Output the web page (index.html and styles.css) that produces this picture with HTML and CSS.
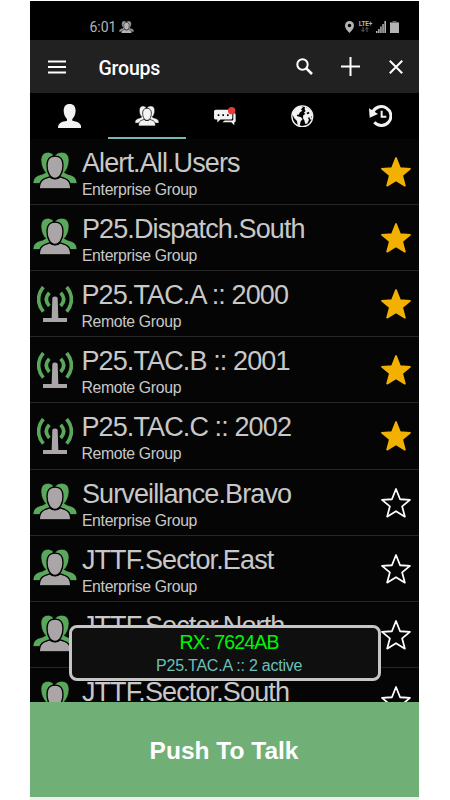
FILE: index.html
```
<!DOCTYPE html>
<html lang="en">
<head>
    <meta charset="UTF-8">
    <meta name="viewport" content="width=device-width, initial-scale=1.0">
    <title>Groups</title>
    <link rel="stylesheet" href="styles.css">
</head>
<body>
    <svg class="sprite" aria-hidden="true">
        <symbol id="group" viewBox="0 0 132 110">
            <g class="back">
                <path d="M47 0C31 0 23 10 24 27C25 42 30 53 38 61L28 66C12 70 1 74 0 94H40L60 60V5Z"/>
                <path d="M85 0C101 0 109 10 108 27C107 42 102 53 94 61L104 66C120 70 131 74 132 94H92L66 60V9Q74 0 85 0Z"/>
            </g>
            <g class="front">
                <path d="M19 110C19 88 26 81 50 74C59 82 73 82 82 74C106 81 113 88 113 110Z"/>
                <path d="M66 12C82 12 90 23 90 39C90 62 80 79 66 79S42 62 42 39C42 23 50 12 66 12Z"/>
            </g>
        </symbol>
        <symbol id="radio" viewBox="0 0 108 108">
            <path d="M19 3C0 26 0 54 19 77M37 20C25 33 25 47 37 60M89 3C108 26 108 54 89 77M71 20C83 33 83 47 71 60" fill="none" stroke="#5aa85c" stroke-width="11"/>
            <path d="M46 35Q54 28 62 35L64 96H90V108H18V96H44Z" fill="#aaa6a8"/>
        </symbol>
        <symbol id="star" viewBox="0 0 88 88">
            <path d="M44 3L56 33L85 35L62 54L70 84L44 68L18 84L26 54L3 35L32 33Z"/>
        </symbol>
    </svg>

    <div class="phone">
        <div class="status-bar">
            <span class="time">6:01</span>
            <svg class="status-group"><use href="#group"/></svg>
            <div class="status-right">
                <svg class="pin" viewBox="0 0 9 12"><path fill-rule="evenodd" d="M4.500 0a4.500 4.500 0 0 1 4.500 4.500C9 8 4.500 12 4.500 12S0 8 0 4.500A4.500 4.500 0 0 1 4.500 0ZM4.500 2.700a1.800 1.800 0 1 0 0 3.600a1.800 1.800 0 1 0 0-3.600Z"/></svg>
                <div class="lte">
                    <span>LTE+</span>
                    <svg viewBox="0 0 8 5"><path d="M2 0V4.500M.3 2.800L2 4.500L3.700 2.800M6 5V.5M4.300 2.200L6 .5L7.700 2.200"/></svg>
                </div>
                <svg class="signal" viewBox="0 0 10 12"><path d="M0 10h1.500v2H0zM2.100 8h1.500v4H2.100zM4.200 5.500h1.500V12H4.200zM6.300 3h1.500v9H6.300zM8.400 0H10v12H8.400z"/></svg>
                <svg class="battery" viewBox="0 0 9 12"><path d="M2.500 0h4v1H9v1H0V1h2.500z" opacity=".6"/><path d="M0 2h9v10H0z"/></svg>
            </div>
        </div>

        <header class="toolbar">
            <svg class="menu-icon" viewBox="0 0 18 14"><path d="M0 1.500H18M0 7H18M0 12.500H18"/></svg>
            <h1>Groups</h1>
            <svg class="search-icon" viewBox="0 0 17 17"><circle cx="6.500" cy="6.500" r="5.200"/><path d="M10.300 10.300L16 16" stroke-width="2.600"/></svg>
            <svg class="plus-icon" viewBox="0 0 19 19"><path d="M9.500 0V19M0 9.500H19"/></svg>
            <svg class="close-icon" viewBox="0 0 14 14"><path d="M.8 .8L13.200 13.200M13.200 .8L.8 13.200"/></svg>
        </header>

        <nav class="tabs">
            <div class="tab">
                <svg class="icon-user" viewBox="0 0 70 72"><path d="M35 0C47 0 53 8 53 20C53 31 48 40 43 45V50C58 53 70 56 70 72H0C0 56 12 53 27 50V45C22 40 17 31 17 20C17 8 23 0 35 0Z"/></svg>
            </div>
            <div class="tab active">
                <svg class="icon-group"><use href="#group"/></svg>
            </div>
            <div class="tab">
                <svg class="icon-chat" viewBox="0 0 66 56">
                    <path d="M58 19h3q4 0 4 4v19q0 4-4 4v9l-9-9H25l7-5h23q3 0 3-4z"/>
                    <path d="M5 8h45q5 0 5 5v20q0 5-5 5H19l-9 9v-9H5q-5 0-5-5V13q0-5 5-5z"/>
                    <path d="M11 22h5v5h-5zM25 22h5v5h-5zM39 22h5v5h-5z" fill="#000"/>
                    <circle cx="53" cy="11" r="11" fill="#e8393c"/>
                </svg>
            </div>
            <div class="tab">
                <svg class="icon-globe" viewBox="0 0 68 68">
                    <circle cx="34" cy="34" r="31.500" fill="none" stroke="#f2f2f2" stroke-width="4"/>
                    <path d="M5 22L16 8L32 3L36 7L30 13L34 17L27 22L23 29L17 29L19 34L29 36L35 42L29 50L26 63L20 61L18 48L10 40L5 30Z"/>
                    <path d="M42 5L55 11L62 21L65 33L60 35L64 40L60 46L55 37L51 38L54 45L49 56L43 57L40 46L36 40L37 31L43 27L39 23L44 18L41 13Z"/>
                    <path d="M46 24L53 20L56 25L50 28Z" fill="#000"/>
                </svg>
            </div>
            <div class="tab">
                <svg class="icon-history" viewBox="0 0 70 66">
                    <path d="M11 22A28.500 28.500 0 1 1 16 52" fill="none" stroke="#f2f2f2" stroke-width="9"/>
                    <path d="M0 10L27 27L2 38Z"/>
                    <path d="M38 17V35H52" fill="none" stroke="#f2f2f2" stroke-width="6"/>
                </svg>
            </div>
        </nav>

        <main class="list">
            <div class="row">
                <svg class="group-icon"><use href="#group"/></svg>
                <div class="info"><h2>Alert.All.Users</h2><p>Enterprise Group</p></div>
                <svg class="star on"><use href="#star"/></svg>
            </div>
            <div class="row">
                <svg class="group-icon"><use href="#group"/></svg>
                <div class="info"><h2>P25.Dispatch.South</h2><p>Enterprise Group</p></div>
                <svg class="star on"><use href="#star"/></svg>
            </div>
            <div class="row">
                <svg class="radio-icon"><use href="#radio"/></svg>
                <div class="info"><h2>P25.TAC.A :: 2000</h2><p>Remote Group</p></div>
                <svg class="star on"><use href="#star"/></svg>
            </div>
            <div class="row">
                <svg class="radio-icon"><use href="#radio"/></svg>
                <div class="info"><h2>P25.TAC.B :: 2001</h2><p>Remote Group</p></div>
                <svg class="star on"><use href="#star"/></svg>
            </div>
            <div class="row">
                <svg class="radio-icon"><use href="#radio"/></svg>
                <div class="info"><h2>P25.TAC.C :: 2002</h2><p>Remote Group</p></div>
                <svg class="star on"><use href="#star"/></svg>
            </div>
            <div class="row">
                <svg class="group-icon"><use href="#group"/></svg>
                <div class="info"><h2>Surveillance.Bravo</h2><p>Enterprise Group</p></div>
                <svg class="star"><use href="#star"/></svg>
            </div>
            <div class="row">
                <svg class="group-icon"><use href="#group"/></svg>
                <div class="info"><h2>JTTF.Sector.East</h2><p>Enterprise Group</p></div>
                <svg class="star"><use href="#star"/></svg>
            </div>
            <div class="row">
                <svg class="group-icon"><use href="#group"/></svg>
                <div class="info"><h2>JTTF.Sector.North</h2></div>
                <svg class="star"><use href="#star"/></svg>
            </div>
            <div class="row">
                <svg class="group-icon"><use href="#group"/></svg>
                <div class="info"><h2>JTTF.Sector.South</h2></div>
                <svg class="star"><use href="#star"/></svg>
            </div>

            <!-- Incoming call popup -->
            <div class="popup">
                <div class="rx">RX: 7624AB</div>
                <div class="active-group">P25.TAC.A :: 2 active</div>
            </div>
        </main>

        <button class="ptt">Push To Talk</button>
    </div>
</body>
</html>
```
FILE: styles.css
```
* {
    box-sizing: border-box;
}

body {
    font-family: "Liberation Sans", Arial, sans-serif;
    margin: 0;
    padding: 1px 0 0 30.4px;
    height: 800px;
    overflow: hidden;
    background: #fff;
}

h1, h2, p {
    margin: 0;
    font-weight: normal;
}

svg {
    display: block;
    flex: none;
}

.sprite {
    position: absolute;
    width: 0;
    height: 0;
}

.phone {
    display: flex;
    flex-direction: column;
    width: 388.8px;
    height: 799px;
    background: #f0f0f0;
    padding-bottom: 3.5px;
}

/* Status bar */
.status-bar {
    display: flex;
    align-items: center;
    height: 39px;
    flex: none;
    padding: 13px 20.5px 0 59px;
    background: #000;
    color: #b4b4b4;
    fill: #b4b4b4;
}

.time {
    font: 14px Roboto, sans-serif;
    width: 30px;
}

.status-group {
    width: 15px;
    height: 12.5px;
    --back: #999;
    --front: #b4b4b4;
}

.status-right {
    display: flex;
    align-items: center;
    margin-left: auto;
}

.pin {
    width: 9px;
    height: 12px;
    margin-right: 4.5px;
}

.lte {
    width: 14px;
    height: 12px;
    margin-right: 3px;
    font: bold 6.5px/6px Roboto, sans-serif;
    letter-spacing: -0.1px;
}

.lte span {
    display: block;
}

.lte svg {
    width: 8px;
    height: 5px;
    margin-left: 2px;
    fill: none;
    stroke: #777;
    stroke-width: 0.8;
}

.signal {
    width: 10px;
    height: 12px;
    margin-right: 4px;
}

.battery {
    width: 9px;
    height: 12px;
}

/* Toolbar */
.toolbar {
    display: flex;
    align-items: center;
    height: 53px;
    flex: none;
    padding: 0 16px 0 17.6px;
    background: #212121;
    stroke: #fff;
    stroke-width: 2;
    fill: none;
}

.toolbar h1 {
    flex: 1;
    margin-left: 32.5px;
    padding-top: 3px;
    color: #fff;
    font: 500 19.5px Roboto, sans-serif;
    letter-spacing: -0.2px;
}

.menu-icon {
    width: 18px;
    height: 14px;
}

.search-icon {
    width: 17px;
    height: 17px;
    margin-right: 28px;
}

.plus-icon {
    width: 19px;
    height: 19px;
    margin-right: 29px;
}

.close-icon {
    width: 14px;
    height: 14px;
}

/* Tabs */
.tabs {
    display: grid;
    grid-template-columns: repeat(5, 1fr);
    height: 45.8px;
    flex: none;
    background: #000;
    fill: #f2f2f2;
}

.tab {
    display: flex;
    align-items: center;
    justify-content: center;
    border-bottom: 2px solid transparent;
    padding-top: 2px;
}

.tab.active {
    border-bottom-color: #77b8b4;
}

.icon-user {
    width: 23.3px;
    height: 24px;
}

.icon-group {
    width: 24px;
    height: 20px;
    --back: #f2f2f2;
    --front: #f2f2f2;
}

.icon-chat {
    width: 22px;
    height: 18.6px;
}

.icon-globe {
    width: 22.6px;
    height: 22.6px;
}

.icon-history {
    width: 23.3px;
    height: 22px;
}

/* Group list */
.list {
    position: relative;
    flex: 1;
    min-height: 0;
    overflow: hidden;
    background: #050505;
}

.row {
    display: flex;
    align-items: flex-start;
    height: 66.15px;
    padding: 0 8px 0 3px;
    border-bottom: 1px solid #262626;
}

.back {
    fill: var(--back, #5aa85c);
    stroke: #000;
    stroke-width: 2;
}

.front {
    fill: var(--front, #aaa6a8);
    stroke: #000;
    stroke-width: 4;
}

.group-icon {
    width: 44px;
    height: 37px;
    margin-top: 13.5px;
    margin-right: 4.5px;
}

.radio-icon {
    width: 36px;
    height: 36px;
    margin: 14.5px 8.8px 0 3.2px;
    overflow: visible;
}

.info {
    flex: 1;
    color: #c8c8c8;
}

.row h2 {
    margin-top: 9px;
    font-size: 27px;
    line-height: 31px;
    letter-spacing: -0.88px;
    white-space: nowrap;
}

.row p {
    margin-top: 2px;
    font-size: 15.8px;
    line-height: 18px;
    letter-spacing: -0.32px;
}

.star {
    width: 30px;
    height: 30px;
    margin-top: 18px;
    fill: none;
    stroke: #fff;
    stroke-width: 5.2;
    stroke-linejoin: round;
}

.star.on {
    fill: #f2b100;
    stroke: #f2b100;
}

.popup {
    position: absolute;
    left: 39px;
    bottom: 21.5px;
    width: 312px;
    height: 56px;
    padding: 3.5px 0 0 7.5px;
    border: 3px solid #c6c6c6;
    border-radius: 8px;
    background: #0f0f0f;
    text-align: center;
}

.rx {
    color: #00f408;
    font-size: 19.5px;
    line-height: 23px;
    letter-spacing: -0.8px;
}

.active-group {
    margin-top: 1px;
    color: #6cc0b9;
    font-size: 16px;
    line-height: 22px;
    letter-spacing: -0.22px;
}

/* Push to talk */
.ptt {
    height: 94.3px;
    flex: none;
    padding: 4px 1.5px 0 0;
    border: none;
    background: #70b077;
    color: #fff;
    font: bold 24.5px "Liberation Sans", Arial, sans-serif;
}
```
